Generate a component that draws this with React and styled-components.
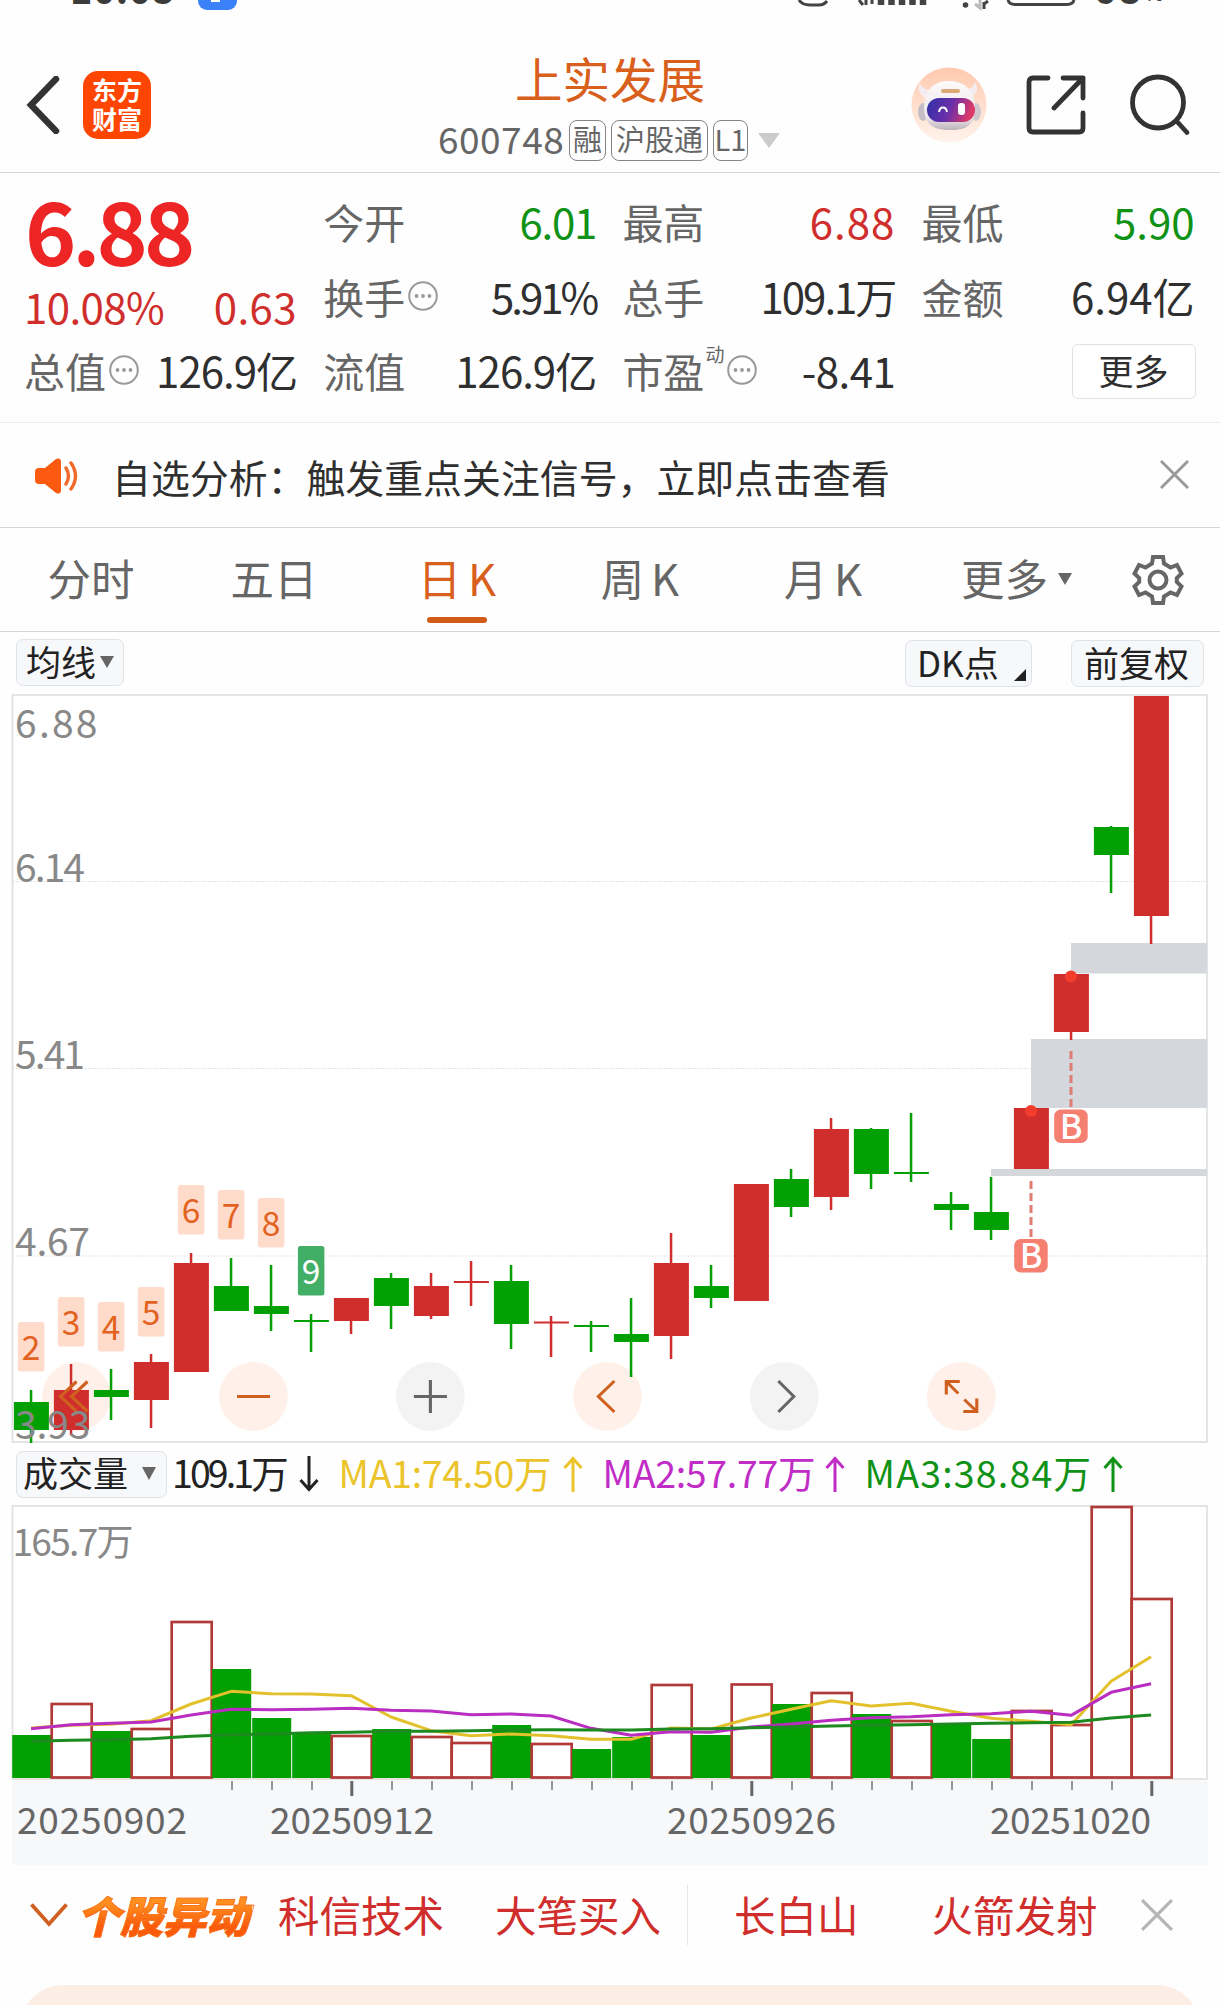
import React from "react";
import styled, { createGlobalStyle } from "styled-components";

const GlobalStyle = createGlobalStyle`
  body {
    margin: 0;
    background: #fefefe;
  }
  * {
    box-sizing: border-box;
  }
`;

const RED = "#d02e2c";
const GREEN = "#02a002";
const ORANGE = "#d95f1c";

const Page = styled.div`
  width: 1220px;
  height: 2005px;
  overflow: hidden;
  display: flex;
  flex-direction: column;
  background: #fefefe;
  color: #2f2f2f;
  font-family: "Noto Sans CJK SC", "Noto Sans", sans-serif;
  font-weight: 400;
  white-space: nowrap;
  svg {
    display: block;
    flex: none;
  }
`;

const StatusBar = styled.div`
  height: 12px;
  flex: none;
  display: flex;
  align-items: flex-end;
  justify-content: space-between;
  overflow: hidden;
  color: #3c3c3c;
`;

const StatusGroup = styled.div`
  display: flex;
  align-items: flex-end;
  height: 60px;
  padding: ${(p) => p.$pad};
`;

const StatusText = styled.span`
  font-size: ${(p) => p.$size}px;
  font-weight: ${(p) => p.$weight || 700};
  line-height: 40px;
  letter-spacing: ${(p) => p.$ls || 0}px;
  padding-bottom: ${(p) => p.$lift || 0}px;
`;

const StatusBadge = styled.span`
  width: 39px;
  height: 39px;
  margin: 0 0 2px 23px;
  border-radius: 9px;
  background: #3b82f8;
  display: flex;
  justify-content: center;
  align-items: flex-end;
  &::after {
    content: "";
    width: 9px;
    height: 4px;
    margin: 0 0 8px -4px;
    background: #fff;
  }
`;

const Header = styled.header`
  height: 161px;
  flex: none;
  display: grid;
  grid-template-columns: 437px 1fr 309px;
  border-bottom: 1px solid #d4d4d4;
`;

const HeaderSide = styled.div`
  display: flex;
  align-items: center;
  padding: ${(p) => p.$pad};
`;

const ShareIcon = styled.svg`
  width: 60px;
  height: 60px;
  margin-left: 39px;
`;

const SearchIcon = styled.svg`
  width: 62px;
  height: 62px;
  margin-left: 43px;
`;

const Logo = styled.div`
  width: 68px;
  height: 68px;
  margin-left: 23px;
  border-radius: 15px;
  background: #fe4502;
  color: #fff;
  display: flex;
  flex-direction: column;
  align-items: center;
  justify-content: center;
  padding-bottom: 2px;
  font-size: 25px;
  font-weight: 700;
  line-height: 29px;
`;

const TitleBlock = styled.div`
  display: flex;
  flex-direction: column;
`;

const Title = styled.h1`
  margin: 38px 0 0 78px;
  font-size: 47.5px;
  line-height: 56px;
  font-weight: 400;
  color: ${ORANGE};
`;

const CodeRow = styled.div`
  display: flex;
  align-items: center;
  height: 42px;
  margin-top: 13px;
`;

const Code = styled.span`
  width: 132px;
  padding: 0 0 4px 1px;
  font-size: 37px;
  line-height: 40px;
  letter-spacing: 0.5px;
  color: #666;
`;

const Tag = styled.span`
  width: ${(p) => p.$w}px;
  height: 41px;
  margin-right: 5px;
  border: 1.5px solid #858585;
  border-radius: 8px;
  font-size: 29px;
  line-height: 35px;
  text-align: center;
  color: #666;
`;

const Triangle = styled.span`
  flex: none;
  width: 0;
  height: 0;
  margin: ${(p) => p.$m || 0};
  border-left: ${(p) => p.$w / 2}px solid transparent;
  border-right: ${(p) => p.$w / 2}px solid transparent;
  border-top: ${(p) => p.$h}px solid ${(p) => p.$color || "#666"};
`;

const Quote = styled.section`
  height: 250px;
  flex: none;
  display: grid;
  grid-template-columns: repeat(4, 273px);
  grid-template-rows: repeat(3, 74.7px);
  column-gap: 26.2px;
  padding: 10px 24px 0;
  border-bottom: 1px solid #ebebeb;
`;

const PriceBlock = styled.div`
  grid-row: span 2;
  display: flex;
  flex-direction: column;
`;

const Price = styled.div`
  height: 103px;
  padding-left: 1px;
  font-size: 87px;
  line-height: 91px;
  font-weight: 700;
  letter-spacing: -4px;
  color: #ee2525;
`;

const Change = styled.div`
  display: flex;
  justify-content: space-between;
  font-size: 42px;
  line-height: 52px;
  letter-spacing: -0.6px;
  color: ${RED};
  span + span {
    letter-spacing: 0.4px;
  }
`;

const Cell = styled.div`
  display: flex;
  align-items: center;
  padding-top: 1px;
  font-size: 41px;
  line-height: 60px;
`;

const CellLabel = styled.span`
  color: #666;
`;

const Sup = styled.span`
  align-self: flex-start;
  padding-left: 1px;
  font-size: 19px;
  line-height: 30px;
  margin-top: 6px;
  color: #666;
`;

const CellValue = styled.span`
  margin-left: auto;
  font-size: 42px;
  letter-spacing: ${(p) => p.$ls || 0}px;
  color: ${(p) => p.$color || "#2f2f2f"};
`;

const InfoDot = styled.svg`
  width: 30px;
  height: 30px;
  margin: 0 0 0 3px;
  fill: none;
  stroke: #999;
`;

const MoreButton = styled.button`
  width: 124px;
  height: 55px;
  margin: 2px -1px 0 auto;
  padding: 0 0 2px;
  border: 1.5px solid #e0e0e0;
  border-radius: 6px;
  background: #fff;
  color: #2f2f2f;
  font: inherit;
  font-size: 35px;
  line-height: 48px;
`;

const Notice = styled.section`
  height: 105px;
  flex: none;
  display: flex;
  align-items: center;
  padding: 2px 31px 0 34px;
  border-bottom: 1px solid #d4d4d4;
  > svg:last-child {
    margin-bottom: 4px;
  }
`;

const NoticeText = styled.span`
  flex: 1;
  margin-left: 32px;
  padding-bottom: 1px;
  font-size: 38.9px;
  line-height: 56px;
`;

const Tabs = styled.nav`
  height: 104px;
  flex: none;
  display: grid;
  grid-template-columns: repeat(5, 183px) 1fr 101px;
  border-bottom: 1px solid #d4d4d4;
`;

const Tab = styled.div`
  display: flex;
  flex-direction: column;
  align-items: center;
  padding: 18px 1px 0 0;
  font-size: 43.5px;
  line-height: 63px;
  word-spacing: -3px;
  color: ${(p) => (p.$active ? ORANGE : "#666")};
  &::after {
    content: "";
    width: 60px;
    height: 6px;
    margin-top: 8px;
    border-radius: 3px;
    background: ${(p) => (p.$active ? "#d05c18" : "transparent")};
  }
`;

const MoreTab = styled.div`
  display: flex;
  align-items: center;
  padding: 0 0 5px 46px;
  font-size: 43.5px;
  line-height: 63px;
  color: #666;
`;

const GearCell = styled.div`
  display: flex;
  align-items: center;
  padding-left: 13px;
`;

const Tools = styled.div`
  height: 62px;
  flex: none;
  display: flex;
  align-items: flex-start;
  padding: 7px 16px 0;
`;

const Chip = styled.button`
  width: ${(p) => p.$w}px;
  height: 47px;
  margin: ${(p) => p.$m || 0};
  padding: 0 0 0 ${(p) => p.$pl}px;
  display: flex;
  align-items: center;
  border: 1.5px solid #dfe2e6;
  border-radius: 7px;
  background: #f7f8fa;
  color: #222;
  font: inherit;
  font-size: 35px;
  line-height: 40px;
  span {
    padding-bottom: 4px;
  }
`;

const Corner = styled.i`
  align-self: flex-end;
  margin: 0 5px 5px auto;
  border-left: 12px solid transparent;
  border-bottom: 12px solid #222;
`;

const VolumeHead = styled.div`
  height: 61px;
  flex: none;
  display: flex;
  align-items: center;
  padding: 0 0 1px 16px;
  font-size: 37.5px;
`;

const Figure = styled.span`
  width: ${(p) => p.$w}px;
  display: flex;
  align-items: center;
  justify-content: space-between;
  margin-left: ${(p) => p.$ml}px;
  line-height: 50px;
  letter-spacing: ${(p) => p.$ls || 0}px;
  color: ${(p) => p.$color};
  span {
    padding-bottom: 4px;
  }
`;

const Ticker = styled.section`
  height: 120px;
  flex: none;
  display: flex;
  align-items: center;
  padding: 0 0 20px 30px;
  font-size: 41.5px;
  line-height: 58px;
  color: ${RED};
`;

const TickerBrand = styled.span`
  margin: 0 26px 0 9px;
  padding: 0 3px 2px 0;
  font-size: 43px;
  font-weight: 900;
  font-style: italic;
  background: linear-gradient(#ff9020 30%, #fa5a0a 70%);
  background-clip: text;
  color: transparent;
  -webkit-text-stroke: 0.8px #f9701a;
`;

const TickerItem = styled.span`
  margin-right: ${(p) => p.$gap}px;
  padding-bottom: 2px;
`;

const Divider = styled.span`
  width: 1px;
  height: 60px;
  margin-right: 46px;
  background: #e6e6e6;
`;

const BottomCard = styled.div`
  height: 60px;
  flex: none;
  margin: 0 20px;
  border-radius: 43px 43px 0 0;
  background: #fceee5;
`;

const More = () => (
  <InfoDot viewBox="0 0 30 30">
    <circle cx="15" cy="15" r="13.8" strokeWidth="2" />
    <g fill="#999" stroke="none">
      <circle cx="8.5" cy="15" r="1.9" />
      <circle cx="15" cy="15" r="1.9" />
      <circle cx="21.5" cy="15" r="1.9" />
    </g>
  </InfoDot>
);

const Close = ({ size, color }) => (
  <svg width={size} height={size} viewBox="0 0 30 30">
    <path d="M1 1L29 29M29 1L1 29" stroke={color} strokeWidth="3" />
  </svg>
);

const Robot = () => (
  <svg width="76" height="76" viewBox="0 0 76 76">
    <defs>
      <linearGradient id="halo" x1="0" y1="0" x2="0" y2="1">
        <stop offset="0" stopColor="#ffc9ae" />
        <stop offset="1" stopColor="#fff3ec" />
      </linearGradient>
      <linearGradient id="visor" x1="0" y1="0" x2="1" y2="0.2">
        <stop offset="0" stopColor="#2f30a8" />
        <stop offset="0.55" stopColor="#6b2fa8" />
        <stop offset="1" stopColor="#dc3a68" />
      </linearGradient>
      <linearGradient id="shell" x1="0" y1="0" x2="0" y2="1">
        <stop offset="0" stopColor="#fdfafa" />
        <stop offset="0.75" stopColor="#ece6ea" />
        <stop offset="1" stopColor="#bdb2ba" />
      </linearGradient>
    </defs>
    <circle cx="38" cy="38" r="37.5" fill="url(#halo)" />
    <path d="M14 31C8 27 6 21 9 16C11 21 15 23 20 23ZM60 31C66 27 68 20 64 15C63 20 59 22 54 23Z" fill="#f4ecee" />
    <ellipse cx="12" cy="45" rx="5" ry="9" fill="#c5bdc6" />
    <ellipse cx="65" cy="45" rx="5" ry="9" fill="#d0c7ce" />
    <path d="M13 40C13 22 24 14 38 14C53 14 64 23 64 40C64 56 58 63 40 63C20 63 13 56 13 40Z" fill="url(#shell)" />
    <rect x="30" y="22" width="19" height="4" rx="2" fill="#dba878" />
    <rect x="16" y="31" width="48" height="24" rx="12" fill="url(#visor)" />
    <path d="M28 45C29 39 35 39 36 45" fill="none" stroke="#fff" strokeWidth="2" />
    <rect x="47" y="36" width="7" height="12" rx="3" fill="#fff" />
  </svg>
);

// [type, body top, body bottom, wick top, wick bottom]
const candles = [
  ["g", 1402, 1430, 1390, 1443],
  ["r", 1390, 1430, 1364, 1435],
  ["g", 1390, 1397, 1369, 1420],
  ["r", 1362, 1400, 1354, 1428],
  ["r", 1263, 1372, 1253, 1372],
  ["g", 1286, 1311, 1258, 1311],
  ["g", 1306, 1314, 1265, 1331],
  ["g", 1320, 1322, 1314, 1352],
  ["r", 1298, 1321, 1298, 1334],
  ["g", 1278, 1306, 1273, 1329],
  ["r", 1286, 1316, 1273, 1319],
  ["r", 1281, 1283, 1261, 1306],
  ["g", 1281, 1324, 1265, 1349],
  ["r", 1321.5, 1323.5, 1316, 1357],
  ["g", 1325, 1327, 1321, 1352],
  ["g", 1334, 1342, 1298, 1377],
  ["r", 1263, 1336, 1233, 1359],
  ["g", 1286, 1298, 1265, 1308],
  ["r", 1184, 1301, 1184, 1301],
  ["g", 1179, 1207, 1169, 1217],
  ["r", 1129, 1197, 1118, 1210],
  ["g", 1129, 1174, 1128, 1189],
  ["g", 1172, 1174, 1113, 1182],
  ["g", 1204, 1210, 1192, 1230],
  ["g", 1212, 1230, 1177, 1240],
  ["r", 1108, 1169, 1108, 1169],
  ["r", 974, 1032, 974, 1040],
  ["g", 827, 855, 826, 893],
  ["r", 696, 916, 696, 944],
];

const turns = [
  [0, 1322, 2],
  [1, 1297, 3],
  [2, 1302, 4],
  [3, 1287, 5],
  [4, 1185, 6],
  [5, 1190, 7],
  [6, 1198, 8],
  [7, 1246, 9],
];

const gaps = [
  [991, 1169, 7],
  [1031, 1039, 69],
  [1071, 943, 30.5],
];

const buySignals = [
  [1031, 1111, 1181, 1239],
  [1071, 976.5, 1051, 1109.5],
];

const priceTicks = [
  ["6.88", 738, 82.5],
  ["6.14", 882, 70],
  ["5.41", 1069, 70],
  ["4.67", 1256, 75],
  ["3.93", 1438.5, 75.5],
];

const volumeTops = [
  1735, 1704, 1731, 1729, 1622, 1669, 1718, 1732, 1736, 1729, 1737, 1743, 1725,
  1744, 1749, 1737, 1685, 1735, 1684.5, 1704, 1693, 1714, 1721, 1723, 1739,
  1711, 1725, 1507, 1599,
];

// closed at or above the previous day, so drawn hollow
const hollowBars = [1, 3, 4, 8, 10, 11, 13, 16, 18, 20, 22, 25, 26, 27, 28];

// three units per pixel, measured from y = 1490
const averages = [
  {
    color: "#e3c12c",
    points: [714, 706, 703, 692, 642, 604, 611, 612, 617, 681, 722, 737, 732, 737, 748, 748, 714, 717, 684, 658, 632, 648, 640, 664, 685, 694, 704, 574, 500],
  },
  {
    color: "#b92dc0",
    points: [716, 704, 700, 696, 675, 658, 659, 658, 655, 661, 663, 674, 672, 678, 715, 736, 725, 727, 711, 702, 691, 683, 680, 674, 671, 664, 676, 607, 581],
  },
  {
    color: "#1d8a20",
    points: [754, 751, 749, 746, 739, 734, 732, 728, 727, 724, 724, 722, 720, 719, 720, 720, 717, 716, 713, 711, 708, 706, 704, 702, 700, 698, 697, 684, 675],
  },
];

const dates = [
  ["20250902", 17, 170],
  ["20250912", 270, 164],
  ["20250926", 667, 169],
  ["20251020", 990, 161],
];

const cx = (i) => 31.1 + i * 40;

const controls = [
  { x: 76.5, icon: "M0 -15L-16 0L0 15M11 -15L-5 0L11 15", warm: true },
  { x: 253.5, icon: "M-16.5 0H16.5", warm: true },
  { x: 430.4, icon: "M-16.5 0H16.5M0 -16.5V16.5" },
  { x: 607.4, icon: "M7 -15.5L-9 0L7 15.5", warm: true },
  { x: 784.3, icon: "M-6 -15.5L9.5 0L-6 15.5" },
  {
    x: 961.3,
    icon: "M-15 -2V-15H-1.5M-15 -15L-3 -3M15.5 2V15H2M15.5 15L3 3",
    warm: true,
  },
];

const CandleChart = () => (
  <svg
    width="1220"
    height="750"
    viewBox="0 694 1220 750"
    fontFamily="Noto Sans CJK SC, sans-serif"
  >
    <rect x="12.5" y="695" width="1194.5" height="747" fill="#fff" stroke="#e2e2e2" strokeWidth="1.8" />
    {[881.5, 1068.5, 1256].map((y) => (
      <line key={y} x1="13" x2="1206" y1={y} y2={y} stroke="#dcdcdc" strokeWidth="1.2" strokeDasharray="1.5 1.5" />
    ))}
    {controls.map((c) => (
      <circle key={c.x} cx={c.x} cy="1396.5" r="34.4" fill={c.warm ? "#fff1e9" : "#f3f3f3"} />
    ))}
    {gaps.map(([x, y, h]) => (
      <rect key={x} x={x} y={y} width={1207 - x} height={h} fill="#d4d7dc" />
    ))}
    {candles.map(([type, top, bottom, high, low], i) => (
      <g key={i} fill={type === "r" ? RED : GREEN}>
        <rect x={cx(i) - 17.2} y={top} width="35" height={bottom - top} />
        <rect x={cx(i) - 1.3} y={high} width="2.5" height={low - high} />
      </g>
    ))}
    {turns.map(([i, y, n]) => (
      <g key={n} textAnchor="middle" fontSize="33.5">
        <rect x={cx(i) - 13.2} y={y} width="26.5" height="49.5" rx="2.5" fill={n === 9 ? "#43ae66" : "#ffdbcb"} />
        <text x={cx(i)} y={y + 37.5} fill={n === 9 ? "#fff" : "#e2621f"}>{n}</text>
      </g>
    ))}
    {buySignals.map(([x, dot, from, badge]) => (
      <g key={x}>
        <circle cx={x} cy={dot} r="6" fill="#f23d2d" />
        <line x1={x} x2={x} y1={from} y2={badge - 2} stroke="#de7d74" strokeWidth="3" strokeDasharray="8 4" />
        <rect x={x - 16.8} y={badge} width="33.5" height="33.5" rx="6.5" fill="#f57f70" />
        <text x={x} y={badge + 29} fontSize="34" fontWeight="500" textAnchor="middle" fill="#fff">B</text>
      </g>
    ))}
    {controls.map((c) => (
      <path
        key={c.x}
        d={c.icon}
        transform={`translate(${c.x} 1396.5)`}
        fill="none"
        stroke={c.warm ? "#d0601f" : "#666"}
        strokeWidth="3.1"
      />
    ))}
    {priceTicks.map(([label, y, w]) => (
      <text key={label} x="15" y={y} fontSize="39" fill="#888" textLength={w}>{label}</text>
    ))}
  </svg>
);

const VolumeChart = () => (
  <svg
    width="1220"
    height="360"
    viewBox="0 1505 1220 360"
    fontFamily="Noto Sans CJK SC, sans-serif"
  >
    <rect x="12.5" y="1506" width="1194.5" height="273" fill="#fff" stroke="#e2e2e2" strokeWidth="1.8" />
    <rect x="12" y="1780.5" width="1196" height="84.5" fill="#f7f8fa" />
    <text x="12.5" y="1555.5" fontSize="37" fill="#888" textLength="121">165.7万</text>
    {volumeTops.map((top, i) =>
      hollowBars.includes(i) ? (
        <rect key={i} x={cx(i) - 19.4} y={top} width="40" height={1777.5 - top} fill="#fff" stroke="#b13a38" strokeWidth="2.7" />
      ) : (
        <rect key={i} x={cx(i) - 18.9} y={top} width="39" height={1778 - top} fill={GREEN} />
      )
    )}
    {averages.map(({ color, points }) => (
      <polyline
        key={color}
        points={points.map((v, i) => `${cx(i)},${1490 + v / 3}`).join(" ")}
        fill="none"
        stroke={color}
        strokeWidth="3"
        strokeLinejoin="round"
      />
    ))}
    {volumeTops.map((_, i) => {
      const major = i === 8 || i === 18 || i === 28;
      return i > 4 ? (
        <rect key={i} x={cx(i) - (major ? 0.8 : 0)} y="1781" width={major ? 3 : 1.8} height={major ? 15 : 9} fill={major ? "#666" : "#8c8c8c"} />
      ) : null;
    })}
    {dates.map(([label, x, w]) => (
      <text key={label} x={x} y="1834" fontSize="37" fill="#666" textLength={w}>{label}</text>
    ))}
  </svg>
);

const Arrow = ({ down }) => (
  <svg width="20" height="36" viewBox="0 0 20 36" fill="none" stroke="currentColor" strokeWidth="3">
    <path d={down ? "M10 0V33M1.5 24L10 33.5L18.5 24" : "M10 36V3M1.5 12L10 2.5L18.5 12"} />
  </svg>
);

const App = () => {
  return (
    <>
      <GlobalStyle />
      <Page>
        <StatusBar>
          <StatusGroup $pad="0 0 0 70px">
            <StatusText $size={38} $ls={0.5} $lift={4}>10:08</StatusText>
            <StatusBadge />
          </StatusGroup>
          <StatusGroup $pad="0 56px 0 0">
            <svg width="296" height="12" viewBox="798 0 296 12" fill="none" stroke="#444" strokeWidth="3">
              <path d="M800 0Q803 5 811 5H820Q825 5 828 1" />
              <path d="M860 0L864 5M867 0V5M873 0V4" />
              <path d="M882 0V5M892.5 0V5M903 0V5M913.5 0V5M924 0V5" strokeWidth="6.5" />
              <circle cx="966.5" cy="5" r="1.8" fill="#444" strokeWidth="2" />
              <path d="M976 4L981 8V0" stroke="#bbb" />
              <path d="M985 9V2M985 4L989 1" />
              <path d="M1009 0Q1010 4.5 1016 4.5H1068Q1074 4.5 1075 0" />
            </svg>
            <StatusText $size={38} $ls={2.5} $lift={4}>68</StatusText>
            <StatusText $size={22} $weight={500} $lift={1}>%</StatusText>
          </StatusGroup>
        </StatusBar>

        <Header>
          <HeaderSide $pad="25px 0 0 26px">
            <svg width="34" height="58" viewBox="0 0 34 58">
              <path d="M30 3L5 29L30 55" fill="none" stroke="#333" strokeWidth="6.5" strokeLinecap="round" />
            </svg>
            <Logo>
              <span>东方</span>
              <span>财富</span>
            </Logo>
          </HeaderSide>
          <TitleBlock>
            <Title>上实发展</Title>
            <CodeRow>
              <Code>600748</Code>
              <Tag $w={37}>融</Tag>
              <Tag $w={97}>沪股通</Tag>
              <Tag $w={35}>L1</Tag>
              <Triangle $w={22} $h={15} $color="#ccc" $m="0 0 0 5px" />
            </CodeRow>
          </TitleBlock>
          <HeaderSide $pad="26px 0 0 0">
            <Robot />
            <ShareIcon viewBox="0 0 60 60" fill="none" stroke="#333" strokeWidth="4.8" strokeLinecap="round" strokeLinejoin="round">
              <path d="M22 3H7Q3 3 3 7V53Q3 57 7 57H53Q57 57 57 53V38M37 3H57V23M57 3L28 33" />
            </ShareIcon>
            <SearchIcon viewBox="0 0 62 62" fill="none" stroke="#333" strokeWidth="4.8" strokeLinecap="round">
              <circle cx="29" cy="28.5" r="25.5" />
              <path d="M47.5 47L58 58.5" />
            </SearchIcon>
          </HeaderSide>
        </Header>

        <Quote>
          <PriceBlock>
            <Price>6.88</Price>
            <Change>
              <span>10.08%</span>
              <span>0.63</span>
            </Change>
          </PriceBlock>
          <Cell>
            <CellLabel>今开</CellLabel>
            <CellValue $color="#0f9216" $ls={-1.2}>6.01</CellValue>
          </Cell>
          <Cell>
            <CellLabel>最高</CellLabel>
            <CellValue $color={RED} $ls={1}>6.88</CellValue>
          </Cell>
          <Cell>
            <CellLabel>最低</CellLabel>
            <CellValue $color="#0f9216">5.90</CellValue>
          </Cell>
          <Cell>
            <CellLabel>换手</CellLabel>
            <More />
            <CellValue $ls={-3}>5.91%</CellValue>
          </Cell>
          <Cell>
            <CellLabel>总手</CellLabel>
            <CellValue $ls={-2}>109.1万</CellValue>
          </Cell>
          <Cell>
            <CellLabel>金额</CellLabel>
            <CellValue>6.94亿</CellValue>
          </Cell>
          <Cell>
            <CellLabel>总值</CellLabel>
            <More />
            <CellValue $ls={-1}>126.9亿</CellValue>
          </Cell>
          <Cell>
            <CellLabel>流值</CellLabel>
            <CellValue $ls={-1}>126.9亿</CellValue>
          </Cell>
          <Cell>
            <CellLabel>市盈</CellLabel>
            <Sup>动</Sup>
            <More />
            <CellValue $ls={-0.5}>-8.41</CellValue>
          </Cell>
          <Cell>
            <MoreButton>更多</MoreButton>
          </Cell>
        </Quote>

        <Notice>
          <svg width="46" height="36" viewBox="0 0 46 36">
            <path d="M1 14Q1 10 5 10H11L22 1Q27 -1 27 4V32Q27 37 22 35L11 26H5Q1 26 1 22Z" fill="#fb5a10" />
            <path d="M32 10Q37 18 32 26M37 5Q46 18 37 31" fill="none" stroke="#f26a2a" strokeWidth="3.4" strokeLinecap="round" />
          </svg>
          <NoticeText>自选分析：触发重点关注信号，立即点击查看</NoticeText>
          <Close size={29} color="#999" />
        </Notice>

        <Tabs>
          <Tab>分时</Tab>
          <Tab>五日</Tab>
          <Tab $active>日 K</Tab>
          <Tab>周 K</Tab>
          <Tab>月 K</Tab>
          <MoreTab>
            更多
            <Triangle $w={15} $h={12} $m="4px 0 0 10px" />
          </MoreTab>
          <GearCell>
            <svg width="52" height="52" viewBox="0 0 52 52" fill="none" stroke="#666" strokeWidth="4">
              <path d="M21 3H31L32 9.5L38.5 13.5L45 11L49.5 19.5L44.8 24V28L49.5 32.5L45 41L38.5 38.5L32 42.5L31 49H21L20 42.5L13.5 38.5L7 41L2.5 32.5L7.2 28V24L2.5 19.5L7 11L13.5 13.5L20 9.5Z" />
              <circle cx="26" cy="26" r="8.5" />
            </svg>
          </GearCell>
        </Tabs>

        <Tools>
          <Chip $w={108} $pl={9}>
            <span>均线</span>
            <Triangle $w={15} $h={12} $m="2px 0 0 4px" />
          </Chip>
          <Chip $w={127} $pl={11} $m="1px 0 0 auto">
            <span>DK点</span>
            <Corner />
          </Chip>
          <Chip $w={133} $pl={12} $m="1px 0 0 39px">
            <span>前复权</span>
          </Chip>
        </Tools>

        <CandleChart />

        <VolumeHead>
          <Chip $w={151} $pl={6}>
            <span>成交量</span>
            <Triangle $w={15} $h={13} $m="2px 0 0 14px" />
          </Chip>
          <Figure $ml={5} $w={147} $color="#222" $ls={-2.9}>
            <span>109.1万</span>
            <Arrow down />
          </Figure>
          <Figure $ml={19.5} $w={244} $color="#ebc42b" $ls={-0.3}>
            <span>MA1:74.50万</span>
            <Arrow />
          </Figure>
          <Figure $ml={20} $w={242} $color="#c02cc6" $ls={-0.3}>
            <span>MA2:57.77万</span>
            <Arrow />
          </Figure>
          <Figure $ml={20} $w={258} $color="#0f9216" $ls={1.2}>
            <span>MA3:38.84万</span>
            <Arrow />
          </Figure>
        </VolumeHead>

        <VolumeChart />

        <Ticker>
          <svg width="38" height="24" viewBox="0 0 38 24">
            <path d="M1.5 1.5L19 21L36.5 1.5" fill="none" stroke="#d0601f" strokeWidth="3.8" />
          </svg>
          <TickerBrand>个股异动</TickerBrand>
          <TickerItem $gap={51}>科信技术</TickerItem>
          <TickerItem $gap={26}>大笔买入</TickerItem>
          <Divider />
          <TickerItem $gap={73}>长白山</TickerItem>
          <TickerItem $gap={43}>火箭发射</TickerItem>
          <Close size={32} color="#b5b5b5" />
        </Ticker>

        <BottomCard />
      </Page>
    </>
  );
};

export default App;
